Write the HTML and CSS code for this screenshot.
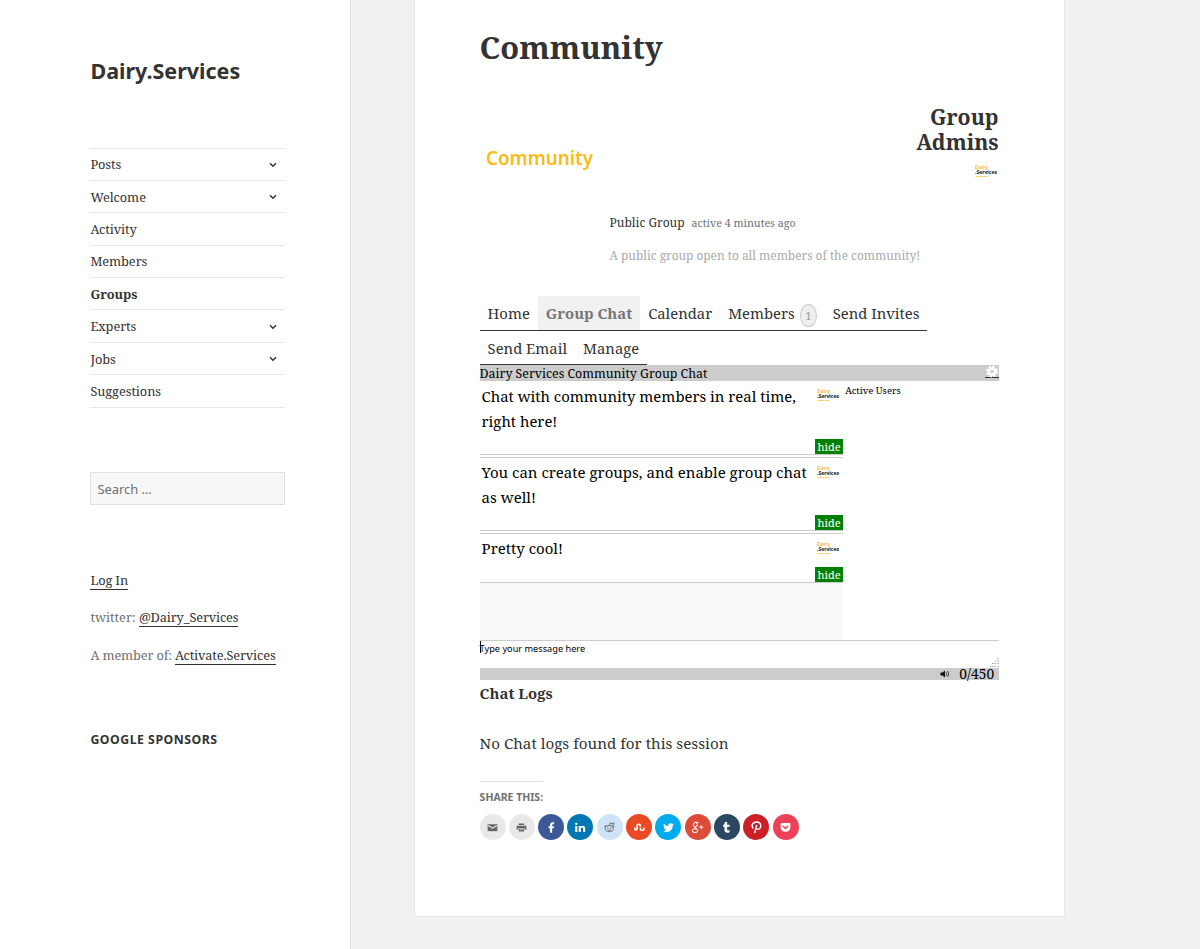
FILE: index.html
```html
<!DOCTYPE html>
<html lang="en">
<head>
  <meta charset="UTF-8">
  <meta name="viewport" content="width=device-width, initial-scale=1.0">
  <title>Community | Dairy.Services</title>
  <link rel="stylesheet" href="styles.css">
</head>
<body>
  <svg width="0" height="0" class="defs">
    <symbol id="avatar" viewBox="0 0 25 25" overflow="visible">
      <text x="1" y="7.5" class="logo-dairy" textLength="13" lengthAdjust="spacingAndGlyphs">Dairy</text>
      <text x="1" y="13.2" class="logo-services" textLength="22" lengthAdjust="spacingAndGlyphs">.Services</text>
      <path d="M1.5 15.500h12.5" stroke="#fbc02d" stroke-width="1.2" stroke-dasharray="2 .4" opacity=".8"/>
    </symbol>
    <symbol id="chevron" viewBox="0 0 8 6">
      <path d="M1 1.2l3 3 3-3" fill="none" stroke="#333" stroke-width="1.5"/>
    </symbol>
  </svg>

  <div class="site">
    <aside class="sidebar">
      <p class="site-title">Dairy.Services</p>
      <ul class="main-nav">
        <li><a href="#">Posts</a><svg class="chevron"><use href="#chevron"/></svg></li>
        <li><a href="#">Welcome</a><svg class="chevron"><use href="#chevron"/></svg></li>
        <li><a href="#">Activity</a></li>
        <li><a href="#">Members</a></li>
        <li class="current"><a href="#">Groups</a></li>
        <li><a href="#">Experts</a><svg class="chevron"><use href="#chevron"/></svg></li>
        <li><a href="#">Jobs</a><svg class="chevron"><use href="#chevron"/></svg></li>
        <li><a href="#">Suggestions</a></li>
      </ul>
      <input class="search-field" type="search" placeholder="Search …">
      <div class="text-widget">
        <p><a href="#">Log In</a></p>
        <p>twitter: <a href="#">@Dairy_Services</a></p>
        <p>A member of: <a href="#">Activate.Services</a></p>
      </div>
      <h2 class="widget-title">Google Sponsors</h2>
    </aside>

    <main class="entry">
      <h1>Community</h1>

      <div class="item-header">
        <svg class="group-logo" viewBox="0 0 120 120">
          <text x="6" y="60" textLength="107" lengthAdjust="spacingAndGlyphs">Community</text>
        </svg>
        <div class="group-meta">
          <p><span class="highlight">Public Group</span><span class="activity">active 4 minutes ago</span></p>
          <p class="description">A public group open to all members of the community!</p>
        </div>
        <div class="group-admins">
          <h3>Group Admins</h3>
          <svg class="avatar"><use href="#avatar"/></svg>
        </div>
      </div>

      <nav class="item-nav">
        <ul>
          <li><a href="#">Home</a></li>
          <li class="selected"><a href="#">Group Chat</a></li>
          <li><a href="#">Calendar</a></li>
          <li><a href="#">Members</a><span class="count">1</span></li>
          <li><a href="#">Send Invites</a></li>
        </ul>
        <ul>
          <li><a href="#">Send Email</a></li>
          <li><a href="#">Manage</a></li>
        </ul>
      </nav>

      <section class="chat">
        <div class="chat-header">
          <span>Dairy Services Community Group Chat</span>
          <a href="#" class="settings">
            <svg viewBox="0 0 14 14">
              <circle cx="7" cy="7" r="3.4" fill="none" stroke="#fff" stroke-width="2.8"/>
              <circle cx="7" cy="7" r="5.3" fill="none" stroke="#fff" stroke-width="2.2" stroke-dasharray="2.3 1.86"/>
            </svg>
          </a>
        </div>
        <div class="chat-body">
          <div class="messages">
            <div class="message first">
              <p>Chat with community members in real time,<br>right here!</p>
              <div class="message-side"><svg class="avatar"><use href="#avatar"/></svg><button>hide</button></div>
            </div>
            <div class="message">
              <p>You can create groups, and enable group chat<br>as well!</p>
              <div class="message-side"><svg class="avatar"><use href="#avatar"/></svg><button>hide</button></div>
            </div>
            <div class="message short">
              <p>Pretty cool!</p>
              <div class="message-side"><svg class="avatar"><use href="#avatar"/></svg><button>hide</button></div>
            </div>
          </div>
          <div class="active-users">Active Users</div>
        </div>
        <div class="composer">
          <span class="caret"></span><span class="hint">Type your message here</span>
          <svg class="grip" viewBox="0 0 10 10">
            <path d="M8 .5h1.5M6 3h1.5M8.5 3H10M3 5.5h1.5M5.5 5.5H7M8.5 5.5H10M.5 8.5H2M3 8.5h1.5M5.5 8.5H7M8.5 8.5H10" stroke="#aaa"/>
          </svg>
        </div>
        <div class="chat-footer">
          <svg class="sound" viewBox="0 0 10 8">
            <path d="M.5 2.5h2L5 .5v7l-2.5-2h-2z" fill="#111"/>
            <path d="M6.2 2.3q1.2 1.7 0 3.4M7.6 1q2.2 3 0 6" fill="none" stroke="#333" stroke-width=".9"/>
          </svg>
          <span>0/450</span>
        </div>
      </section>

      <h4 class="logs-title">Chat Logs</h4>
      <p class="logs-text">No Chat logs found for this session</p>

      <div class="share">
        <h3>Share this:</h3>
        <ul>
          <li class="grey"><svg viewBox="0 0 16 16"><path d="M2 4h12v8.5H2z"/><path d="M2.5 5.5L8 8.7l5.500-3.200" fill="none" stroke="#e9e9e9" stroke-width="1.3"/></svg></li>
          <li class="grey"><svg viewBox="0 0 16 16"><path d="M4.500 3h7v2h-7zM2 5.700h12v5h-2V8.500H4v2.200H2zM4.800 9.200h6.400V13H4.800z"/><path d="M6 10.500h4" stroke="#e9e9e9" stroke-width=".8"/></svg></li>
          <li class="facebook"><svg viewBox="0 0 16 16"><path d="M6.200 14.500V8.800H4.400V6.400h1.800V4.800c0-2.200 1.300-3.300 3.200-3.300h1.800v2.400H10c-.9 0-1.200.4-1.200 1.100v1.400h2.400l-.3 2.400H8.800v5.700z"/></svg></li>
          <li class="linkedin"><svg viewBox="0 0 16 16"><path d="M1.500 6h2.600v7.500H1.500zM5.800 6h2.400v1.100C8.700 6.200 9.600 5.800 10.700 5.800c2.400 0 3.100 1.500 3.100 3.600v4.100h-2.500V9.900c0-1.100-.2-2-1.300-2S8.400 8.800 8.400 9.900v3.600H5.800z"/><circle cx="2.800" cy="3.500" r="1.500"/></svg></li>
          <li class="reddit"><svg viewBox="0 0 16 16"><g fill="none" stroke="#666" stroke-width="1.100"><ellipse cx="7.800" cy="9.300" rx="5" ry="3.800"/><path d="M8 5.500l.8-3 3 .6M3.400 7.700C1 7.500 1.600 4.800 4.800 6.300M12.200 7.700c2.400-.2 1.800-2.900-1.400-1.400M5.700 10.900q2.100 1.200 4.200 0"/><circle cx="12.700" cy="3.200" r="1"/></g><circle cx="6" cy="8.500" r=".9" fill="#666"/><circle cx="9.700" cy="8.500" r=".9" fill="#666"/></svg></li>
          <li class="stumbleupon"><svg viewBox="0 0 16 16"><path d="M2.200 8v1.700c0 1.700 2.700 1.700 2.700 0V5.800c0-2.400 4.200-2.400 4.200 0v1.400M9.100 8.300v1.400c0 2.300 4.400 2.300 4.400 0V8" fill="none" stroke="#fff" stroke-width="1.900"/></svg></li>
          <li class="twitter"><svg viewBox="0 0 16 16"><path d="M14.500 4.100c-.5.200-1 .3-1.500.4.600-.3.900-.9 1.100-1.500-.5.300-1.100.5-1.700.6a2.700 2.700 0 0 0-4.600 2.500A7.600 7.600 0 0 1 2.300 3.300a2.700 2.700 0 0 0 .8 3.600c-.4 0-.8-.1-1.200-.3 0 1.300.9 2.400 2.100 2.700-.4.100-.8.100-1.200 0 .4 1.100 1.400 1.800 2.500 1.900A5.500 5.500 0 0 1 1.300 12.300C7 15.800 13.300 12 13.200 5.600c.5-.4 1-.9 1.300-1.500z"/></svg></li>
          <li class="google"><svg viewBox="0 0 16 16"><g fill="none" stroke="#fff" stroke-width="1.200"><ellipse cx="5.300" cy="4.500" rx="2.400" ry="2.800"/><path d="M9.400 1.700H5.300M6.500 7.300C4.300 8.400 6 9 7.300 9.900M5.300 7.500c-1.700 1-.8 1.700.5 2"/><ellipse cx="5" cy="11.900" rx="3.500" ry="2.300"/><path d="M12.600 5v5M10 7.500h5.200"/></g></svg></li>
          <li class="tumblr"><svg viewBox="0 0 16 16"><path d="M5.900 1.200h2.900v3.500h3.100v2.500H8.800v3c0 1.600 1 1.900 2.900 1v2.500c-3 1.400-6.200.6-6.200-2.700V7.200H3.800V5.200c1.300-.5 1.900-1.800 2.100-4z"/></svg></li>
          <li class="pinterest"><svg viewBox="0 0 16 16"><path d="M4 9.200C.7 5 3.800 1.200 8.200 1.200c6.400 0 6.500 8.900 1.400 8.900-1.200 0-1.900-.5-2.200-1.200M8.300 4.800L5.700 15" fill="none" stroke="#fff" stroke-width="1.700"/></svg></li>
          <li class="pocket"><svg viewBox="0 0 16 16"><path d="M3.300 2.500h9.400q1.300 0 1.300 1.300v3.700c0 8-12 8-12 0V3.800q0-1.300 1.300-1.300z"/><path d="M5 6.300l3 2.900 3-2.900" fill="none" stroke="#ee4056" stroke-width="1.700" stroke-linecap="round"/></svg></li>
        </ul>
      </div>
    </main>
  </div>
</body>
</html>
```

FILE: styles.css
```css
* {
  box-sizing: border-box;
}

body {
  margin: 0;
  background: #f1f1f1;
  color: #333;
  font-family: "Noto Serif", "Droid Serif", "DejaVu Serif", serif;
  font-size: 15px;
  overflow: hidden;
}

h1, h2, h3, h4, p, ul {
  margin: 0;
  padding: 0;
}

ul {
  list-style: none;
}

a {
  color: inherit;
  text-decoration: none;
}

svg {
  overflow: visible;
}

.defs {
  position: absolute;
  top: 40px;
  left: 40px;
}

.site {
  display: flex;
  height: 949px;
}

/* Sidebar */
.sidebar {
  width: 351px;
  padding: 57px 65px 0 90.4px;
  background: #fff;
  border-right: 1px solid #dedede;
  font-size: 12.8px;
}

.site-title {
  height: 90.5px;
  font: bold 21.5px/27px "Noto Sans", sans-serif;
}

.main-nav {
  width: 194.6px;
  border-bottom: 1px solid #e8e8e8;
}

.main-nav li {
  display: flex;
  align-items: center;
  justify-content: space-between;
  height: 32.4px;
  padding-right: 8px;
  border-top: 1px solid #e8e8e8;
}

.main-nav li a {
  letter-spacing: -.08px;
}

.main-nav .current {
  font-weight: bold;
}

.chevron {
  width: 8px;
  height: 6px;
  margin-top: 1px;
}

.search-field {
  display: block;
  width: 194.6px;
  height: 33px;
  margin-top: 64.5px;
  padding: 1px 6px 0;
  border: 1px solid #e0e0e0;
  border-radius: 0;
  background: #f7f7f7;
  font: 12.9px "Noto Sans", sans-serif;
}

.search-field::placeholder {
  color: #707070;
}

.text-widget {
  height: 162px;
  margin-top: 64.5px;
  color: #707070;
  line-height: 20px;
  white-space: nowrap;
}

.text-widget p {
  margin-bottom: 17.8px;
}

.text-widget a {
  color: #333;
  border-bottom: 1px solid #333;
  letter-spacing: -.15px;
}

.text-widget p:last-child {
  letter-spacing: -.15px;
}

.widget-title {
  font: bold 12.3px/16px "Noto Sans", sans-serif;
  letter-spacing: .5px;
  text-transform: uppercase;
}

/* Content */
.entry {
  width: 649px;
  height: 916px;
  margin-left: 64px;
  padding: 27px 65.4px 0 64.6px;
  background: #fff;
  box-shadow: 0 0 1px rgba(0, 0, 0, .25);
}

h1 {
  height: 78px;
  font-size: 30.9px;
  line-height: 40px;
}

.item-header {
  display: flex;
  height: 191px;
}

.group-logo {
  flex: none;
  width: 120px;
  height: 120px;
}

.group-logo text {
  fill: #f9bc15;
  font: 600 20px "Noto Sans", sans-serif;
}

.group-meta {
  width: 300px;
  margin-left: 10px;
  padding-top: 108px;
  font-size: 12px;
  line-height: 20px;
  white-space: nowrap;
}

.activity {
  margin-left: 7px;
  color: #707070;
  font-size: 10.7px;
}

.description {
  margin-top: 11.5px;
  color: #aaa;
  font-size: 11.9px;
}

.group-admins {
  width: 85px;
  margin-left: auto;
  text-align: right;
}

.group-admins h3 {
  font-size: 21.3px;
  line-height: 24.5px;
}

.avatar {
  width: 25px;
  height: 25px;
}

.group-admins .avatar {
  margin-top: 7px;
}

.logo-dairy {
  fill: #fbc02d;
  font: bold 5.5px "Noto Sans", sans-serif;
}

.logo-services {
  fill: #111;
  font: bold 5.5px "Noto Sans", sans-serif;
}

.item-nav ul {
  display: flex;
  width: max-content;
  height: 34.5px;
  border-bottom: 1px solid #333;
}

.item-nav li {
  padding: 0 8px;
  font-size: 14.83px;
  line-height: 35px;
  white-space: nowrap;
}

.item-nav .selected {
  background: #f1f1f1;
  color: #767676;
  font-weight: bold;
}

.count {
  display: inline-block;
  position: relative;
  top: 1px;
  width: 17px;
  height: 23px;
  margin-left: 5px;
  border: 1px solid #ccc;
  border-radius: 50%;
  background: #eee;
  color: #999;
  font-size: 11px;
  line-height: 21px;
  text-align: center;
}

/* Chat */
.chat {
  color: #000;
}

.chat-header {
  display: flex;
  justify-content: space-between;
  height: 16px;
  background: #ccc;
  font-size: 12.4px;
  line-height: 17px;
}

.settings {
  width: 14px;
  height: 13px;
  border-bottom: 1px solid #333;
}

.settings svg {
  display: block;
  width: 14px;
  height: 13px;
}

.chat-body {
  display: flex;
  height: 259px;
}

.messages {
  width: 363.6px;
  background: #f9f9f9;
}

.message {
  display: flex;
  justify-content: space-between;
  height: 74px;
  margin-bottom: 2px;
  padding-left: 2px;
  background: #fff;
  border-top: 1px solid #ccc;
  border-bottom: 1px solid #ccc;
  box-shadow: 0 2px #fff;
  line-height: 25px;
  white-space: nowrap;
}

.message p {
  padding-top: 2px;
}

.message.first {
  border-top: 0;
}

.message.first p {
  padding-top: 3px;
  font-size: 14.9px;
}

.message.short {
  height: 50px;
  box-shadow: none;
}

.message-side {
  display: flex;
  flex-direction: column;
  align-items: flex-end;
  justify-content: space-between;
  width: 28px;
}

.message-side .avatar {
  margin: 4px 2px 0 0;
}

.message-side button {
  width: 28px;
  height: 15px;
  padding: 0;
  border: 0;
  background: green;
  color: #fff;
  font: 11px/15px "Noto Serif", "Droid Serif", "DejaVu Serif", serif;
}

.active-users {
  padding: 2px 0 0 2px;
  font-size: 9.5px;
  line-height: 15px;
}

.composer {
  display: flex;
  position: relative;
  height: 28px;
  border-top: 1px solid #ccc;
  font: 9.2px/16px "Noto Sans", sans-serif;
}

.caret {
  width: 1px;
  height: 12px;
  margin-right: -1px;
  background: #000;
}

.grip {
  position: absolute;
  right: 0;
  bottom: 0;
  width: 10px;
  height: 10px;
}

.chat-footer {
  display: flex;
  align-items: center;
  justify-content: flex-end;
  height: 12px;
  padding-right: 4.5px;
  background: #ccc;
  font-size: 13.8px;
  line-height: 12px;
}

.sound {
  width: 10px;
  height: 8px;
  margin-right: 9px;
}

.logs-title {
  height: 50px;
  font-size: 14.9px;
  line-height: 27px;
}

.logs-text {
  height: 51px;
  font-size: 15.2px;
  line-height: 27px;
}

/* Share buttons */
.share h3 {
  width: max-content;
  height: 33px;
  border-top: 1px solid #ddd;
  color: #707070;
  font: bold 10.5px/31px "Noto Sans", sans-serif;
  text-transform: uppercase;
}

.share ul {
  display: flex;
  gap: 3.3px;
}

.share li {
  display: flex;
  align-items: center;
  justify-content: center;
  width: 26px;
  height: 26px;
  border-radius: 50%;
  fill: #fff;
}

.share svg {
  width: 13px;
  height: 13px;
}

.share .grey {
  background: #e9e9e9;
  fill: #666;
}

.facebook { background: #3b5998; }
.linkedin { background: #0077b5; }
.reddit { background: #cee3f8; }
.stumbleupon { background: #eb4924; }
.twitter { background: #00aced; }
.google { background: #dd4b39; }
.tumblr { background: #2c4762; }
.pinterest { background: #cb2027; }
.pocket { background: #ee4056; }
```
